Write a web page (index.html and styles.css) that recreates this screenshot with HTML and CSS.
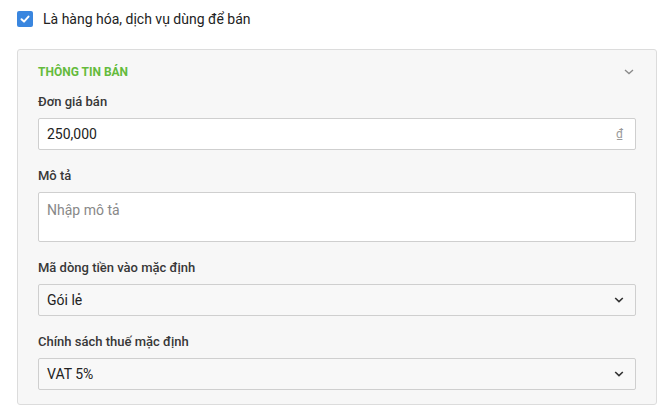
FILE: index.html
```html
<!DOCTYPE html>
<html lang="vi">
<head>
<meta charset="utf-8">
<link rel="stylesheet" href="styles.css">
</head>
<body>
<label class="check-row">
  <span class="checkbox">
    <svg viewBox="0 0 16 16" width="16" height="16"><path d="M4.5 8.3 L7 10.6 L11.5 5.6" fill="none" stroke="#fff" stroke-width="2" stroke-linecap="round" stroke-linejoin="round"/></svg>
  </span>
  <span class="check-text">Là hàng hóa, dịch vụ dùng để bán</span>
</label>

<section class="card">
  <div class="card-head">
    <span class="card-title">THÔNG TIN BÁN</span>
    <svg class="head-chevron" viewBox="0 0 10 6" width="10" height="6"><path d="M1 1 L5 4.6 L9 1" fill="none" stroke="#8a8a8a" stroke-width="1.3"/></svg>
  </div>

  <div class="field">
    <div class="label">Đơn giá bán</div>
    <div class="input">
      <span class="value">250,000</span>
      <span class="currency">₫</span>
    </div>
  </div>

  <div class="field">
    <div class="label">Mô tả</div>
    <div class="textarea">Nhập mô tả</div>
  </div>

  <div class="field">
    <div class="label">Mã dòng tiền vào mặc định</div>
    <div class="select">
      <span class="value">Gói lẻ</span>
      <svg class="chev" viewBox="0 0 10 6" width="10" height="6"><path d="M1.2 1 L5 4.6 L8.8 1" fill="none" stroke="#333" stroke-width="1.6"/></svg>
    </div>
  </div>

  <div class="field last">
    <div class="label">Chính sách thuế mặc định</div>
    <div class="select">
      <span class="value">VAT 5%</span>
      <svg class="chev" viewBox="0 0 10 6" width="10" height="6"><path d="M1.2 1 L5 4.6 L8.8 1" fill="none" stroke="#333" stroke-width="1.6"/></svg>
    </div>
  </div>
</section>
</body>
</html>
```

FILE: styles.css
```css
* { box-sizing: border-box; }

body {
  margin: 0;
  padding: 8px 14px 0 17px;
  background: #fff;
  font-family: Roboto, "Noto Sans", Arial, sans-serif;
  color: #222;
}

.check-row {
  display: flex;
  align-items: center;
  height: 22px;
  gap: 10px;
}

.checkbox {
  width: 16px;
  height: 16px;
  border-radius: 2px;
  background: #3a86df;
  display: flex;
}

.check-text {
  font-size: 14px;
  color: #222;
}

.card {
  margin-top: 19px;
  width: 640px;
  background: #f7f7f7;
  border: 1px solid #dcdcdc;
  border-radius: 3px;
  padding: 12px 20px 14px 20px;
}

.card-head {
  display: flex;
  align-items: center;
  justify-content: space-between;
  height: 20px;
  margin-bottom: 11px;
}

.card-title {
  font-size: 12px;
  font-weight: 700;
  color: #64bb3c;
}

.head-chevron {
  margin-right: 2px;
}

.field {
  margin-bottom: 17px;
}

.field.last { margin-bottom: 0; }

.label {
  font-size: 13px;
  font-weight: 500;
  line-height: 18px;
  color: #383838;
  margin-bottom: 7px;
}

.input, .select {
  height: 32px;
  border: 1px solid #cfcfcf;
  border-radius: 2px;
  display: flex;
  align-items: center;
  justify-content: space-between;
  padding: 0 12px 0 8px;
  font-size: 14px;
  color: #222;
}

.input { background: #fff; }

.currency {
  font-size: 12px;
  color: #999;
}

.select {
  background: #f8f8f8;
  padding-right: 11px;
}

.textarea {
  height: 50px;
  background: #fff;
  border: 1px solid #cfcfcf;
  border-radius: 2px;
  padding: 8px 8px;
  font-size: 14px;
  line-height: 18px;
  color: #888;
}
```
